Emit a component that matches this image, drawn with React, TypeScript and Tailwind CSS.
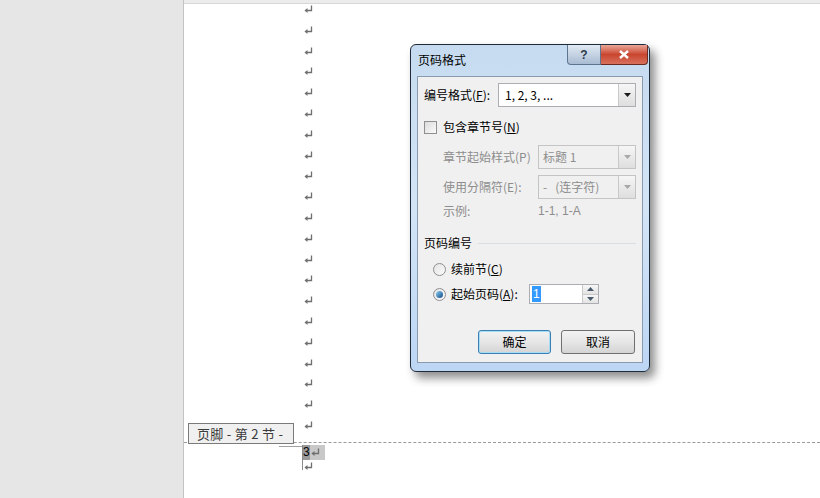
import React from 'react';

const cjk = { fontFamily: '"Noto Sans CJK SC", "Liberation Sans", sans-serif' };

const Mark = () => (
    <svg width="9" height="9" viewBox="0 0 9 9" className="block">
        <path d="M7.5 0.5 V5.5 H1.5" fill="none" stroke="#6f6f6f" strokeWidth="1.3" />
        <path d="M0.5 5.5 L3.5 3 V8 Z" fill="#6f6f6f" />
    </svg>
);

const Arrow = ({ disabled }: { disabled?: boolean }) => (
    <div className="w-[17px] h-full border-l border-[#c9c9c9] bg-gradient-to-b from-[#f6f6f6] to-[#dedede] flex items-center justify-center">
        <svg width="7" height="4" viewBox="0 0 7 4">
            <path d="M0 0 H7 L3.5 4 Z" fill={disabled ? '#a8a8a8' : '#1a1a1a'} />
        </svg>
    </div>
);

const Radio = ({ checked }: { checked?: boolean }) => (
    <div className="w-[13px] h-[13px] rounded-full border border-[#8f8f8f] bg-gradient-to-br from-[#e4e4e4] to-[#fbfbfb] flex items-center justify-center">
        {checked && <div className="w-[7px] h-[7px] rounded-full bg-gradient-to-br from-[#8fd3f6] to-[#0c4a85]" />}
    </div>
);

const Dialog: React.FC = () => (
    <div
        className="absolute left-[410px] top-[44px] w-[240px] h-[328px] rounded-[6px] border border-[#1e2b3b] bg-gradient-to-b from-[#c6dbf0] via-[#d3e4f6] to-[#bcd6f4] shadow-[5px_6px_10px_rgba(0,0,0,0.45)] flex flex-col px-[6px] pb-[8px]"
        style={cjk}
    >
        <div className="h-[31px] flex items-start">
            <div className="pt-[6px] pl-[1px] text-[12px] text-black leading-[18px]">页码格式</div>
            <div className="ml-auto flex -mr-[5px]">
                <div className="w-[34px] h-[20px] rounded-bl-[4px] border border-t-0 border-[#5d7590] bg-gradient-to-b from-[#e1e9f3] to-[#a9bcd3] flex items-center justify-center text-[12px] font-bold text-[#2c3a4b]" style={{ fontFamily: '"Liberation Sans", sans-serif' }}>
                    ?
                </div>
                <div className="w-[47px] h-[20px] rounded-br-[4px] border border-t-0 border-l-0 border-[#6b2a22] bg-gradient-to-b from-[#e8a596] via-[#c9452f] to-[#d8705c] flex items-center justify-center">
                    <svg width="12" height="9" viewBox="0 0 12 9">
                        <path d="M2 1 L10 8 M10 1 L2 8" stroke="#ffffff" strokeWidth="2.4" />
                    </svg>
                </div>
            </div>
        </div>
        <div className="flex-1 border border-[#8a9bb0] bg-[#f0f0f0] text-[12px] leading-[16px] text-black flex flex-col px-[6px] pt-[6px]">
            <div className="flex items-center h-[24px]">
                <div className="w-[74px]">编号格式(<span className="underline">F</span>):</div>
                <div className="flex-1 h-[24px] bg-white border border-[#abadb3] flex items-stretch">
                    <div className="flex-1 pl-[6px] flex items-center">1, 2, 3, ...</div>
                    <Arrow />
                </div>
            </div>
            <div className="flex items-center h-[20px] mt-[10px] gap-[6px]">
                <div className="w-[13px] h-[13px] border border-[#8f8f8f] bg-gradient-to-br from-[#dcdcdc] to-[#fafafa]" />
                <div>包含章节号(<span className="underline">N</span>)</div>
            </div>
            <div className="flex items-center h-[24px] mt-[8px] pl-[19px] text-[#8d8d8d]">
                <div className="w-[95px]">章节起始样式(P)</div>
                <div className="flex-1 h-[24px] border border-[#c4c4c4] flex items-stretch">
                    <div className="flex-1 pl-[4px] flex items-center">标题 1</div>
                    <Arrow disabled />
                </div>
            </div>
            <div className="flex items-center h-[24px] mt-[6px] pl-[19px] text-[#8d8d8d]">
                <div className="w-[95px]">使用分隔符(E):</div>
                <div className="flex-1 h-[24px] border border-[#c4c4c4] flex items-stretch">
                    <div className="flex-1 pl-[4px] flex items-center whitespace-pre">-   (连字符)</div>
                    <Arrow disabled />
                </div>
            </div>
            <div className="flex items-center h-[16px] mt-[4px] pl-[19px] text-[#8d8d8d]">
                <div className="w-[95px]">示例:</div>
                <div style={{ fontFamily: '"Liberation Sans", sans-serif' }}>1-1, 1-A</div>
            </div>
            <div className="flex items-center h-[16px] mt-[16px] gap-[6px]">
                <div>页码编号</div>
                <div className="flex-1 h-px bg-[#d5dfe5]" />
            </div>
            <div className="flex items-center h-[18px] mt-[9px] pl-[9px] gap-[5px]">
                <Radio />
                <div>续前节(<span className="underline">C</span>)</div>
            </div>
            <div className="flex items-center h-[20px] mt-[6px] pl-[9px] gap-[5px]">
                <Radio checked />
                <div className="w-[73px]">起始页码(<span className="underline">A</span>):</div>
                <div className="w-[70px] h-[20px] bg-white border border-[#abadb3] flex items-stretch">
                    <div className="flex-1 pl-[2px] flex items-center">
                        <span className="bg-[#3399ff] text-white px-[1px]" style={{ fontFamily: '"Liberation Sans", sans-serif' }}>1</span>
                    </div>
                    <div className="w-[16px] flex flex-col border-l border-[#c9c9c9]">
                        <div className="flex-1 border-b border-[#c9c9c9] bg-gradient-to-b from-[#f7f7f7] to-[#e3e3e3] flex items-center justify-center">
                            <svg width="7" height="4" viewBox="0 0 7 4"><path d="M0 4 H7 L3.5 0 Z" fill="#4a5a6c" /></svg>
                        </div>
                        <div className="flex-1 bg-gradient-to-b from-[#f7f7f7] to-[#e3e3e3] flex items-center justify-center">
                            <svg width="7" height="4" viewBox="0 0 7 4"><path d="M0 0 H7 L3.5 4 Z" fill="#4a5a6c" /></svg>
                        </div>
                    </div>
                </div>
            </div>
            <div className="flex justify-end gap-[10px] mt-[26px] pr-[1px]">
                <div className="w-[73px] h-[24px] rounded-[3px] border border-[#3c7fb1] shadow-[inset_0_0_0_1px_#a6dcf6] bg-gradient-to-b from-[#f2f2f2] via-[#e6e6e6] to-[#d4d4d4] flex items-center justify-center">确定</div>
                <div className="w-[74px] h-[24px] rounded-[3px] border border-[#707070] bg-gradient-to-b from-[#f2f2f2] via-[#e6e6e6] to-[#d4d4d4] flex items-center justify-center">取消</div>
            </div>
        </div>
    </div>
);

const App: React.FC = () => {
    const marks = Array.from({ length: 21 });
    return (
        <div className="w-[820px] h-[498px] flex bg-white relative overflow-hidden">
            <div className="w-[184px] bg-[#e6e6e6] border-r border-[#c3c3c3]" />
            <div className="flex-1 flex flex-col relative">
                <div className="h-[4px] bg-[#ececec] border-b border-[#d6d6d6]" />
                <div className="flex flex-col pt-[1px]">
                    {marks.map((_, i) => (
                        <div key={i} className="h-[20.8px] pl-[120px]">
                            <Mark />
                        </div>
                    ))}
                </div>
                <div
                    className="absolute left-[4px] top-[423px] h-[21px] pl-[8px] pr-[10px] border border-[#7a7a7a] bg-[#f0f0f0] text-[13px] tracking-[0.3px] text-[#3a3a3a] flex items-center"
                    style={cjk}
                >
                    页脚 - 第 2 节 -
                </div>
                <div className="border-t border-dashed border-[#9a9a9a]" />
                <div className="flex items-start pt-[2px]">
                    <div className="w-[23px] mt-[1px] h-px bg-[#a0a0a0] ml-[95px]" />
                    <div className="flex flex-col">
                        <div className="flex items-center h-[15px] bg-[#c8c8c8] border-l border-[#8a8a8a]">
                            <span className="bg-[#9a9a9a] text-[12px] leading-[15px] text-black" style={{ fontFamily: '"Liberation Sans", sans-serif' }}>3</span>
                            <span className="pr-[5px] pl-[1px]"><Mark /></span>
                        </div>
                        <div className="h-[10px] border-l border-[#8a8a8a] pt-[2px] pl-[1px]">
                            <Mark />
                        </div>
                    </div>
                </div>
            </div>
            <Dialog />
        </div>
    );
};

export default App;
